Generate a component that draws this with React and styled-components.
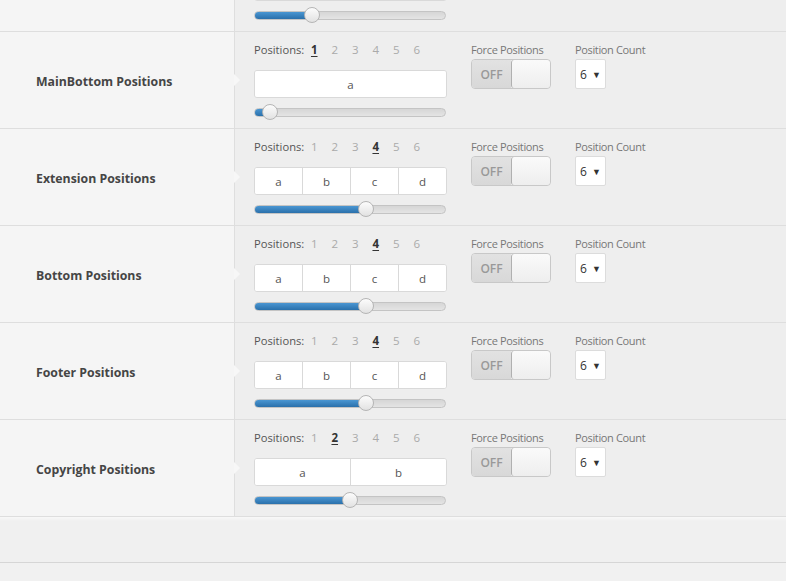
import React from "react";
import styled, { createGlobalStyle } from "styled-components";

const GlobalStyle = createGlobalStyle`
  html, body {
    margin: 0;
    padding: 0;
    background: #f1f1f1;
    font-family: "Open Sans", "Liberation Sans", sans-serif;
    overflow: hidden;
  }
`;

const Page = styled.div`
  width: 786px;
  height: 581px;
  overflow: hidden;
`;

const Table = styled.div`
  margin-top: -65px;
  border-bottom: 1px solid #dedede;
`;

const Row = styled.div`
  display: flex;
  height: 96px;
  border-bottom: 1px solid #dedede;
  &:last-child {
    border-bottom: none;
  }
`;

const Label = styled.div`
  position: relative;
  width: 198px;
  flex: 0 0 198px;
  padding-left: 36px;
  padding-top: 2px;
  display: flex;
  align-items: center;
  background: #f5f5f5;
  border-right: 1px solid #dedede;
  font-size: 12.3px;
  font-weight: 700;
  color: #454545;

  &::after {
    content: "";
    position: absolute;
    right: -6px;
    top: 50%;
    margin-top: -6px;
    border-style: solid;
    border-width: 6px 0 6px 6px;
    border-color: transparent transparent transparent #f7f7f7;
  }
`;

const Fields = styled.div`
  flex: 1;
  display: flex;
  gap: 24px;
  padding: 10px 0 0 19px;
  background: #eeeeee;
`;

const Column = styled.div`
  display: flex;
  flex-direction: column;
  width: ${(p) => p.$width}px;
`;

const PosLine = styled.div`
  display: flex;
  height: 16px;
  line-height: 16px;
  font-size: 11.2px;
  color: #555;
`;

const PosTitle = styled.span`
  width: 50px;
  white-space: nowrap;
`;

const Num = styled.span`
  width: 20.5px;
  text-align: center;
  font-size: 11.5px;
  color: ${(p) => (p.$active ? "#333" : "#aaa")};
  font-weight: ${(p) => (p.$active ? 700 : 400)};
  text-decoration: ${(p) => (p.$active ? "underline" : "none")};
  text-underline-offset: 2px;
`;

const Boxes = styled.div`
  display: flex;
  margin-top: 12px;
  height: 26px;
  background: #fff;
  border: 1px solid #d9d9d9;
  border-radius: 3px;
  overflow: hidden;
`;

const Cell = styled.div`
  flex: ${(p) => p.$grow || 1};
  display: flex;
  align-items: center;
  justify-content: center;
  font-size: 11.5px;
  color: #555;
  background: ${(p) => (p.$dark ? "#5a5a5a" : "#fff")};
  & + & {
    border-left: 1px solid #d9d9d9;
  }
`;

const Slider = styled.div`
  position: relative;
  margin-top: 6px;
  height: 16px;
  width: 192px;
  display: flex;
  align-items: center;
`;

const Track = styled.div`
  position: relative;
  width: 100%;
  height: 7px;
  border: 1px solid #c4c4c4;
  border-radius: 5px;
  background: linear-gradient(#d6d6d6, #e4e4e4);
  overflow: hidden;
`;

const Fill = styled.div`
  height: 100%;
  background: linear-gradient(#4a96d2, #2a70ab);
`;

const Handle = styled.div`
  position: absolute;
  top: 0;
  width: 14px;
  height: 14px;
  margin-left: -8px;
  border: 1px solid #b5b5b5;
  border-radius: 50%;
  background: linear-gradient(#fcfcfc, #e2e2e2);
`;

const SmallLabel = styled.div`
  height: 16px;
  line-height: 16px;
  font-size: 11px;
  letter-spacing: -0.35px;
  color: #777;
  white-space: nowrap;
`;

const Switch = styled.div`
  display: flex;
  margin-top: 1px;
  width: 78px;
  height: 28px;
  border: 1px solid #c8c8c8;
  border-radius: 4px;
  overflow: hidden;
`;

const Off = styled.div`
  width: 39px;
  display: flex;
  align-items: center;
  justify-content: center;
  background: linear-gradient(#e2e2e2, #d8d8d8);
  font-size: 12px;
  font-weight: 600;
  color: #999;
`;

const Knob = styled.div`
  flex: 1;
  background: linear-gradient(#fafafa, #eeeeee);
  border-left: 1px solid #b0b0b0;
  border-radius: 3px;
`;

const Select = styled.div`
  display: flex;
  align-items: center;
  gap: 5px;
  margin-top: 1px;
  width: 25px;
  height: 28px;
  padding-left: 4px;
  background: #fff;
  border: 1px solid #dcdcdc;
  border-radius: 2px;
  font-size: 12px;
  color: #333;
`;

const Caret = styled.span`
  font-size: 9px;
  color: #333;
`;

const Footer = styled.div`
  height: 45px;
  background: linear-gradient(#f8f8f8 0px, #f0f0f0 4px, #f0f0f0);
  border-bottom: 1px solid #d6d6d6;
`;

// the first row is scrolled mostly out of view: only its box edge and slider show
const rows = [
  { name: "", count: 3, cells: [{ t: "", dark: true, grow: 2 }, { t: "" }], pos: 58, partial: true },
  { name: "MainBottom Positions", count: 1, cells: [{ t: "a" }], pos: 16 },
  { name: "Extension Positions", count: 4, cells: [{ t: "a" }, { t: "b" }, { t: "c" }, { t: "d" }], pos: 112 },
  { name: "Bottom Positions", count: 4, cells: [{ t: "a" }, { t: "b" }, { t: "c" }, { t: "d" }], pos: 112 },
  { name: "Footer Positions", count: 4, cells: [{ t: "a" }, { t: "b" }, { t: "c" }, { t: "d" }], pos: 112 },
  { name: "Copyright Positions", count: 2, cells: [{ t: "a" }, { t: "b" }], pos: 96 },
];

const PositionRow = ({ row }) => (
  <Row>
    <Label>{row.name}</Label>
    <Fields>
      <Column $width={193}>
        <PosLine>
          {!row.partial && (
            <>
              <PosTitle>Positions:</PosTitle>
              {[1, 2, 3, 4, 5, 6].map((n) => (
                <Num key={n} $active={n === row.count}>
                  {n}
                </Num>
              ))}
            </>
          )}
        </PosLine>
        <Boxes>
          {row.cells.map((c, i) => (
            <Cell key={i} $dark={c.dark} $grow={c.grow}>
              {c.t}
            </Cell>
          ))}
        </Boxes>
        <Slider>
          <Track>
            <Fill style={{ width: row.pos }} />
          </Track>
          <Handle style={{ left: row.pos }} />
        </Slider>
      </Column>
      {!row.partial && (
        <>
          <Column $width={80}>
            <SmallLabel>Force Positions</SmallLabel>
            <Switch>
              <Off>OFF</Off>
              <Knob />
            </Switch>
          </Column>
          <Column $width={80}>
            <SmallLabel>Position Count</SmallLabel>
            <Select>
              6 <Caret>▼</Caret>
            </Select>
          </Column>
        </>
      )}
    </Fields>
  </Row>
);

export default function App() {
  return (
    <Page>
      <GlobalStyle />
      <Table>
        {rows.map((r, i) => (
          <PositionRow key={i} row={r} />
        ))}
      </Table>
      <Footer />
    </Page>
  );
}
